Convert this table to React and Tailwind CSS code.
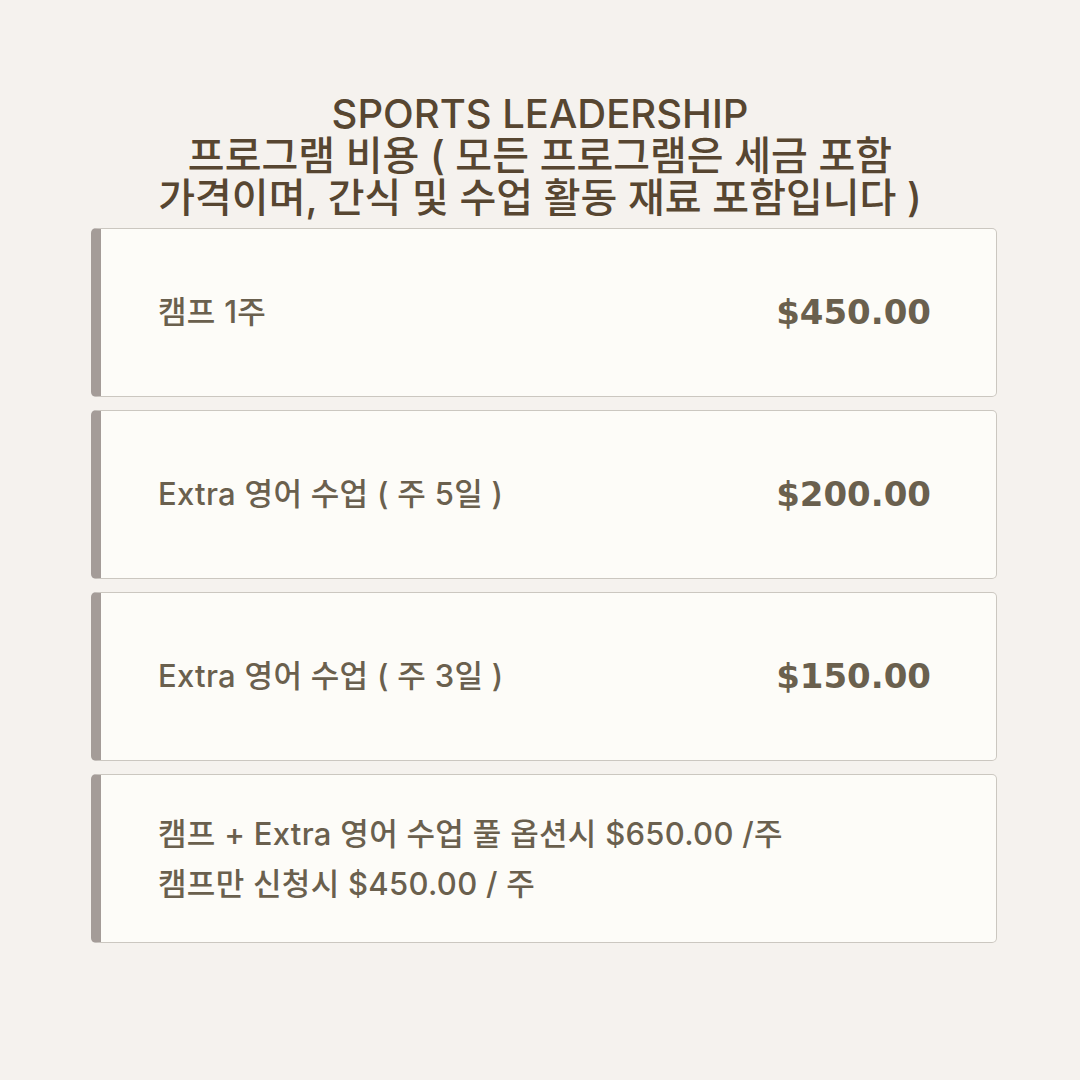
import React from "react";

const items = [
  { label: "캠프 1주", price: "$450.00" },
  { label: "Extra 영어 수업 ( 주 5일 )", price: "$200.00" },
  { label: "Extra 영어 수업 ( 주 3일 )", price: "$150.00" },
];

function Card({ children }) {
  return (
    <div className="ml-[91px] w-[906px] h-[169px] flex items-center bg-[#fdfcf8] border border-[#cbc7c0] border-l-[10px] border-l-[#a49c98] rounded-[5px] pl-[57px] pr-[65px]">
      {children}
    </div>
  );
}

export default function App() {
  return (
    <div className="w-[1080px] h-[1080px] bg-[#f5f2ee] pt-[93px] font-['Inter','Noto_Sans_CJK_KR',sans-serif]">
      <h1 className="text-center text-[#574631] text-[40px] leading-[42px] font-medium h-[135px]">
        SPORTS LEADERSHIP
        <br />
        프로그램 비용 ( 모든 프로그램은 세금 포함
        <br />
        가격이며, 간식 및 수업 활동 재료 포함입니다 )
      </h1>

      <div className="flex flex-col gap-[13px]">
        {items.map((it) => (
          <Card key={it.price}>
            <div className="flex-1 text-[31px] tracking-[0.3px] text-[#6a604e] font-medium">{it.label}</div>
            <div className="text-[34px] text-[#6a604e] font-bold font-['DejaVu_Sans',sans-serif]">{it.price}</div>
          </Card>
        ))}
        <Card>
          <p className="text-[31px] tracking-[0.3px] leading-[50px] text-[#6a604e] font-medium">
            캠프 + Extra 영어 수업 풀 옵션시 $650.00 /주
            <br />
            캠프만 신청시 $450.00 / 주
          </p>
        </Card>
      </div>
    </div>
  );
}
